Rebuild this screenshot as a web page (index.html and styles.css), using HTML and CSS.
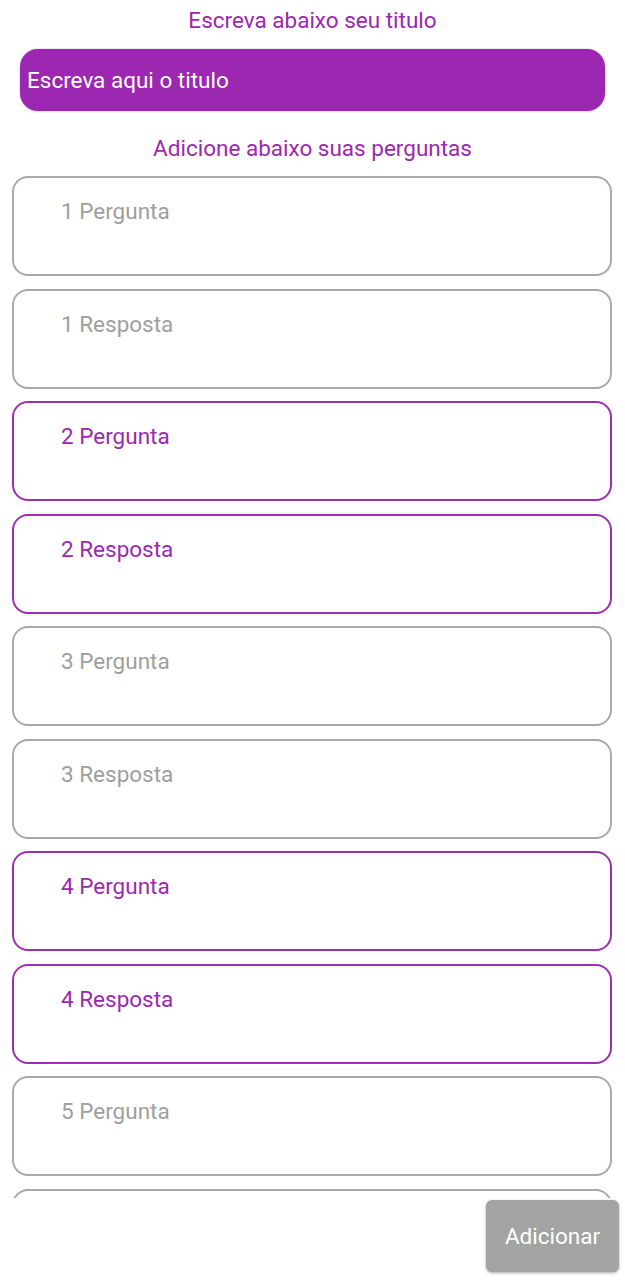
FILE: index.html
```html
<!DOCTYPE html>
<html lang="pt">
<head>
<meta charset="utf-8">
<link rel="stylesheet" href="styles.css">
</head>
<body>
<div class="screen">
  <div class="heading">Escreva abaixo seu titulo</div>
  <div class="title-input">Escreva aqui o titulo</div>
  <div class="heading heading-2">Adicione abaixo suas perguntas</div>
  <div class="list">
    <div class="field">1 Pergunta</div>
    <div class="field">1 Resposta</div>
    <div class="field active">2 Pergunta</div>
    <div class="field active">2 Resposta</div>
    <div class="field">3 Pergunta</div>
    <div class="field">3 Resposta</div>
    <div class="field active">4 Pergunta</div>
    <div class="field active">4 Resposta</div>
    <div class="field">5 Pergunta</div>
    <div class="field">5 Resposta</div>
  </div>
  <div class="footer">
    <button class="add-btn">Adicionar</button>
  </div>
</div>
</body>
</html>
```

FILE: styles.css
```css
* { box-sizing: border-box; }
html, body { margin: 0; padding: 0; background: #ffffff; }
body {
  font-family: Roboto, "Noto Sans", sans-serif;
  width: 625px;
  height: 1280px;
  overflow: hidden;
}
.screen {
  display: flex;
  flex-direction: column;
  height: 1280px;
}
.heading {
  flex: 0 0 auto;
  color: #9c27b0;
  font-size: 22.5px;
  text-align: center;
  line-height: 26px;
  padding-top: 7px;
}
.title-input {
  flex: 0 0 62px;
  margin: 16px 20px 0 20px;
  height: 62px;
  border-radius: 18px;
  background: #9c27b0;
  color: #ffffff;
  font-size: 22.5px;
  display: flex;
  align-items: center;
  padding-left: 7px;
  box-shadow: 0 0 2px rgba(156, 39, 176, 0.45);
}
.heading-2 {
  padding-top: 24px;
}
.list {
  flex: 1 1 auto;
  min-height: 0;
  display: flex;
  flex-direction: column;
  gap: 12.5px;
  padding: 15px 13px 0 12px;
  overflow: hidden;
}
.field {
  flex: 0 0 100px;
  height: 100px;
  border: 2px solid #a9a9a9;
  border-radius: 16px;
  padding: 20px 0 0 47px;
  font-size: 22.5px;
  color: #9e9e9e;
  line-height: 26px;
}
.field.active {
  border-color: #9c2fb0;
  color: #9c27b0;
}
.footer {
  flex: 0 0 82px;
  display: flex;
  justify-content: flex-end;
  align-items: flex-start;
  padding: 2px 6px 0 0;
}
.add-btn {
  width: 133px;
  height: 72px;
  border: none;
  border-radius: 6px;
  background: #a3a3a3;
  color: #ffffff;
  font-family: Roboto, "Noto Sans", sans-serif;
  font-size: 22.5px;
  box-shadow: 0 1px 3px rgba(0, 0, 0, 0.35);
}
```
